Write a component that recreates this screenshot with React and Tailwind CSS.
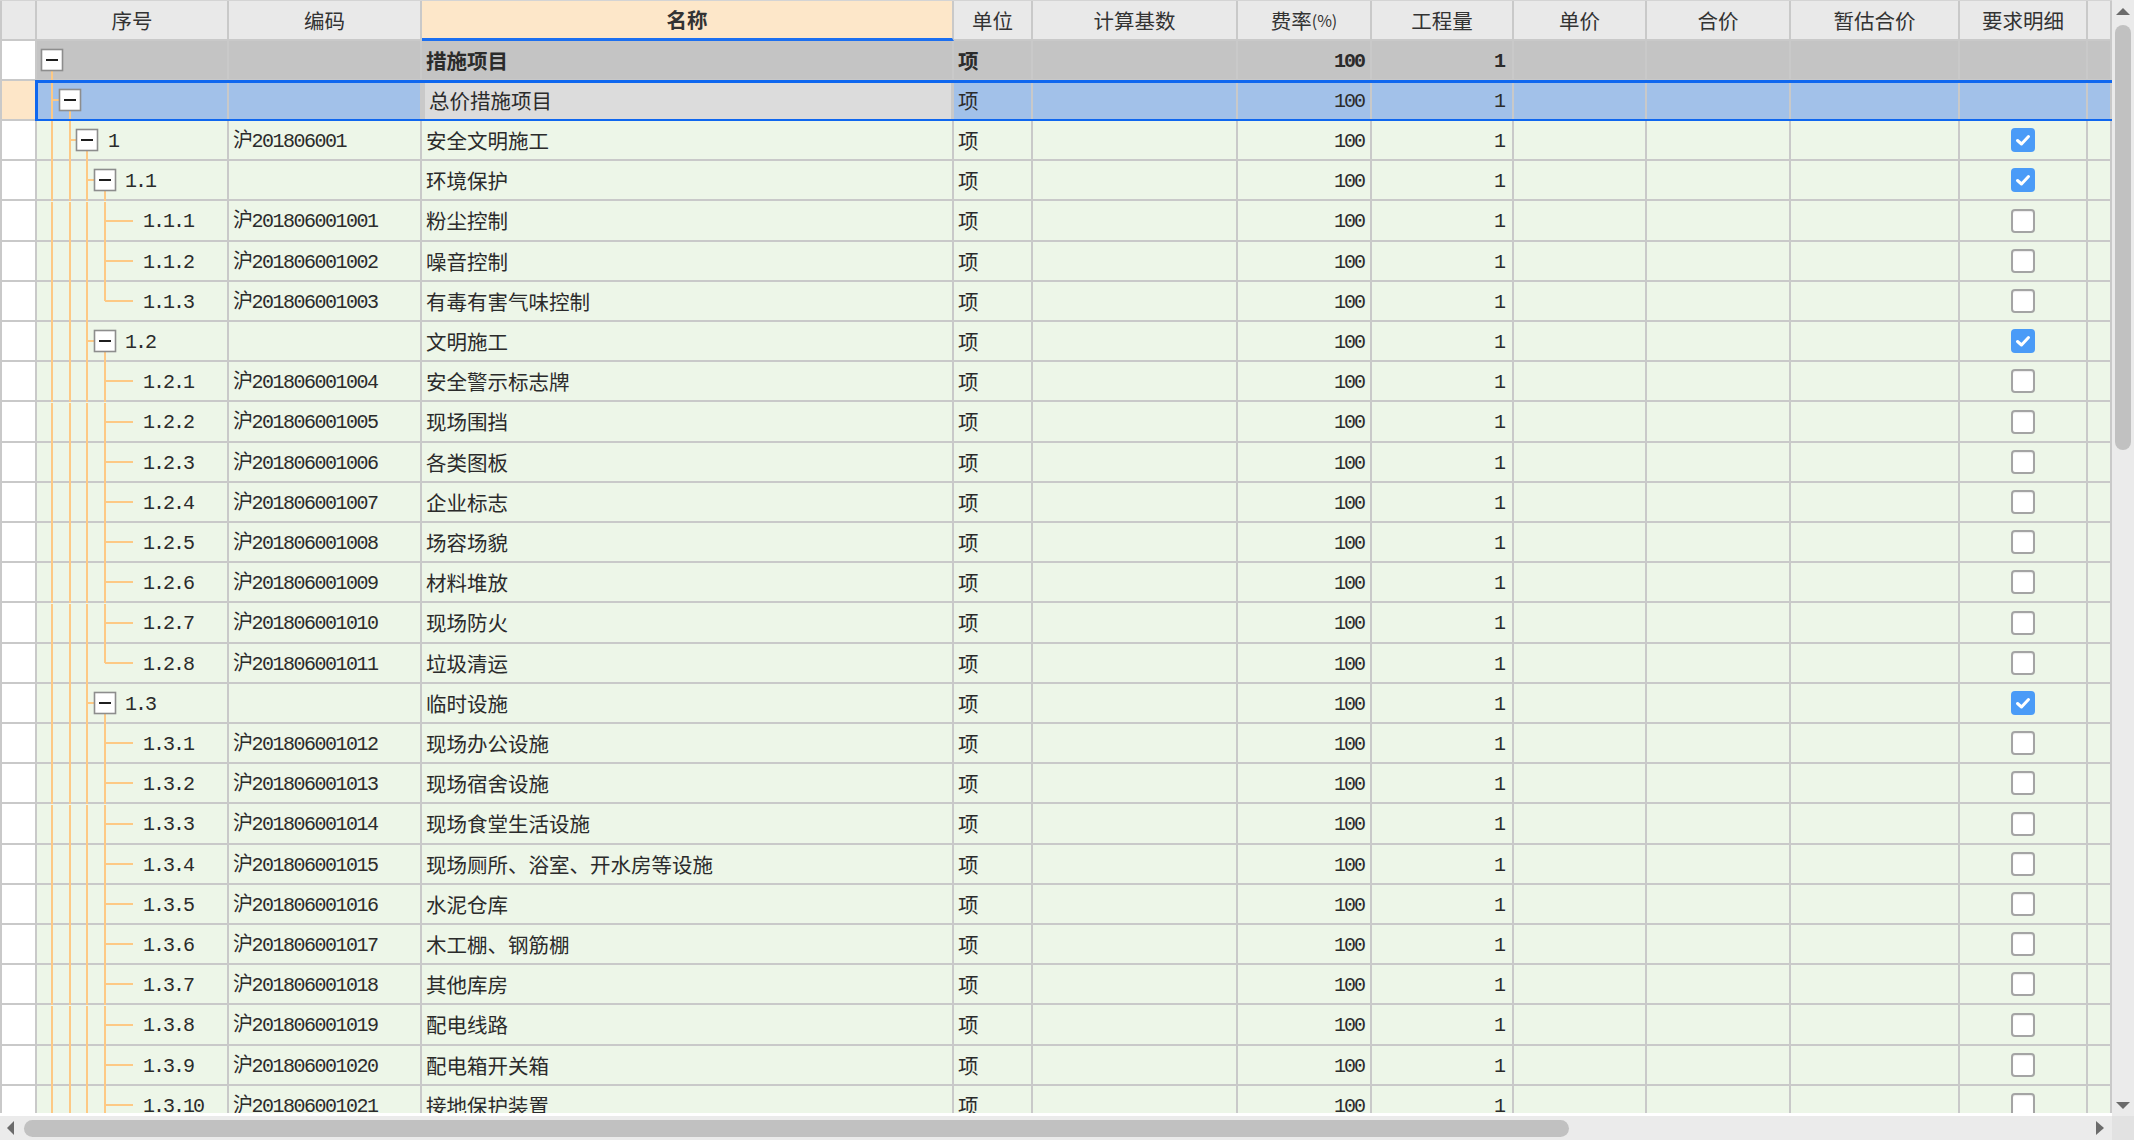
import React from 'react';

const ROWS = [
  { kind: 'node', level: 0, seq: '', code: '', name: '措施项目', check: null, root: true },
  { kind: 'node', level: 1, seq: '', code: '', name: '总价措施项目', check: null, selected: true },
  { kind: 'node', level: 2, seq: '1', code: '沪201806001', name: '安全文明施工', check: true },
  { kind: 'node', level: 3, seq: '1.1', code: '', name: '环境保护', check: true },
  { kind: 'leaf', seq: '1.1.1', code: '沪201806001001', name: '粉尘控制', check: false },
  { kind: 'leaf', seq: '1.1.2', code: '沪201806001002', name: '噪音控制', check: false },
  { kind: 'leaf', seq: '1.1.3', code: '沪201806001003', name: '有毒有害气味控制', check: false, last: true },
  { kind: 'node', level: 3, seq: '1.2', code: '', name: '文明施工', check: true },
  { kind: 'leaf', seq: '1.2.1', code: '沪201806001004', name: '安全警示标志牌', check: false },
  { kind: 'leaf', seq: '1.2.2', code: '沪201806001005', name: '现场围挡', check: false },
  { kind: 'leaf', seq: '1.2.3', code: '沪201806001006', name: '各类图板', check: false },
  { kind: 'leaf', seq: '1.2.4', code: '沪201806001007', name: '企业标志', check: false },
  { kind: 'leaf', seq: '1.2.5', code: '沪201806001008', name: '场容场貌', check: false },
  { kind: 'leaf', seq: '1.2.6', code: '沪201806001009', name: '材料堆放', check: false },
  { kind: 'leaf', seq: '1.2.7', code: '沪201806001010', name: '现场防火', check: false },
  { kind: 'leaf', seq: '1.2.8', code: '沪201806001011', name: '垃圾清运', check: false, last: true },
  { kind: 'node', level: 3, seq: '1.3', code: '', name: '临时设施', check: true },
  { kind: 'leaf', seq: '1.3.1', code: '沪201806001012', name: '现场办公设施', check: false },
  { kind: 'leaf', seq: '1.3.2', code: '沪201806001013', name: '现场宿舍设施', check: false },
  { kind: 'leaf', seq: '1.3.3', code: '沪201806001014', name: '现场食堂生活设施', check: false },
  { kind: 'leaf', seq: '1.3.4', code: '沪201806001015', name: '现场厕所、浴室、开水房等设施', check: false },
  { kind: 'leaf', seq: '1.3.5', code: '沪201806001016', name: '水泥仓库', check: false },
  { kind: 'leaf', seq: '1.3.6', code: '沪201806001017', name: '木工棚、钢筋棚', check: false },
  { kind: 'leaf', seq: '1.3.7', code: '沪201806001018', name: '其他库房', check: false },
  { kind: 'leaf', seq: '1.3.8', code: '沪201806001019', name: '配电线路', check: false },
  { kind: 'leaf', seq: '1.3.9', code: '沪201806001020', name: '配电箱开关箱', check: false },
  { kind: 'leaf', seq: '1.3.10', code: '沪201806001021', name: '接地保护装置', check: false },
];

const CX = [15, 33, 50, 68];
const LINE = '#fdc985';

function Tree({ row }) {
  const els = [];
  let width = 190;
  if (row.kind === 'leaf') {
    width = 106;
    [0, 1, 2].forEach((k) =>
      els.push(<line key={'v' + k} x1={CX[k]} y1={0} x2={CX[k]} y2={41} stroke={LINE} strokeWidth="2" />)
    );
    els.push(<line key="v3" x1={68} y1={0} x2={68} y2={row.last ? 19 : 41} stroke={LINE} strokeWidth="2" />);
    els.push(<line key="h" x1={68} y1={19} x2={96} y2={19} stroke={LINE} strokeWidth="2" />);
  } else {
    const L = row.level;
    if (L === 2) width = 71;
    if (L === 3) width = 88;
    for (let k = 0; k < L; k++) {
      els.push(<line key={'v' + k} x1={CX[k]} y1={0} x2={CX[k]} y2={41} stroke={LINE} strokeWidth="2" />);
    }
    if (L > 0) {
      els.push(<line key="h" x1={CX[L - 1]} y1={19} x2={CX[L] - 10} y2={19} stroke={LINE} strokeWidth="2" />);
    }
    els.push(<line key="down" x1={CX[L]} y1={29} x2={CX[L]} y2={41} stroke={LINE} strokeWidth="2" />);
    els.push(
      <rect key="box" x={CX[L] - 10.5} y={8.5} width="21" height="21" fill="#ffffff" stroke="#8d8d8d" strokeWidth="1.6" />
    );
    els.push(<line key="minus" x1={CX[L] - 6} y1={19} x2={CX[L] + 6} y2={19} stroke="#1f1f1f" strokeWidth="2" />);
  }
  return (
    <svg width={width} height="38" viewBox={`0 0 ${width} 38`} className="shrink-0 overflow-visible">
      {els}
    </svg>
  );
}

function Checkbox({ checked }) {
  if (checked) {
    return (
      <div className="w-[24px] h-[24px] rounded-[4px] bg-[#4a9bf7] flex items-center justify-center">
        <svg width="18" height="18" viewBox="0 0 18 18">
          <path d="M3.5 9.5 L7.5 13 L14.5 5.5" fill="none" stroke="#ffffff" strokeWidth="3" strokeLinecap="round" strokeLinejoin="round" />
        </svg>
      </div>
    );
  }
  return <div className="w-[24px] h-[24px] rounded-[4px] bg-white border-2 border-[#a4a4a4] shadow-[inset_0_1px_1px_rgba(0,0,0,0.08)]" />;
}

const cell = 'shrink-0 h-full border-r-2 border-[#c9c9c9] flex items-center';
const cjk = "font-['Noto_Sans_CJK_SC','Liberation_Sans',sans-serif]";
const mono = "font-['Liberation_Mono','Noto_Sans_CJK_SC',monospace]";

function Row({ row, tall }) {
  const bg = row.root ? 'bg-[#c4c4c4]' : row.selected ? 'bg-[#a2c1e9]' : 'bg-[#edf6e8]';
  const bold = row.root ? 'font-bold' : '';
  return (
    <div
      className={`relative flex ${tall ? 'h-[41px]' : 'h-[40px]'} shrink-0 border-b-2 border-[#c9c9c9] text-[#2b2b2b] ${bg}`}
    >
      <div className={`${cell} w-[37px] border-l-2 ${row.selected ? 'bg-[#fde6c8]' : 'bg-white'}`} />
      <div className={`${cell} w-[192px]`}>
        <Tree row={row} />
        {row.seq && <span className={`${mono} mt-[3px] text-[20px] tracking-[-2px] leading-none`}>{row.seq}</span>}
      </div>
      <div className={`${cell} w-[193px] pl-[4px]`}>
        <span className={`${mono} mt-[3px] text-[20px] tracking-[-1.5px] leading-none`}>{row.code}</span>
      </div>
      <div
        className={`${cell} w-[532px] pl-[4px] ${
          row.selected ? 'bg-[#dcdcdc] border-l-[3px] border-r-[3px] border-[#0f67ef]' : ''
        }`}
      >
        <span className={`${cjk} text-[20.5px] leading-none ${bold}`}>{row.name}</span>
      </div>
      <div className={`${cell} w-[79px] pl-[4px]`}>
        <span className={`${cjk} text-[20.5px] leading-none ${bold}`}>项</span>
      </div>
      <div className={`${cell} w-[205px]`} />
      <div className={`${cell} w-[134px] justify-end pr-[6px]`}>
        <span className={`${mono} mt-[3px] text-[20px] tracking-[-2px] leading-none ${bold}`}>100</span>
      </div>
      <div className={`${cell} w-[142px] justify-end pr-[8px]`}>
        <span className={`${mono} mt-[3px] text-[20px] tracking-[-2px] leading-none ${bold}`}>1</span>
      </div>
      <div className={`${cell} w-[133px]`} />
      <div className={`${cell} w-[144px]`} />
      <div className={`${cell} w-[169px]`} />
      <div className={`${cell} w-[128px] justify-center`}>
        {row.check !== null && <Checkbox checked={row.check} />}
      </div>
      <div className={`${cell} w-[24px]`} />
      {row.selected && (
        <div className="absolute left-[35px] right-0 -top-px -bottom-[3px] border-t-[3px] border-b-[3px] border-l-[3px] border-[#0f67ef] pointer-events-none" />
      )}
    </div>
  );
}

const headCell =
  "shrink-0 h-full border-r-2 border-b-2 border-[#c9c9c9] bg-[#e9e9e9] flex items-center justify-center text-[20.5px] leading-none text-[#333]";

function Header() {
  return (
    <div className={`flex h-[41px] shrink-0 border-t border-[#d4d4d4] ${cjk}`}>
      <div className={`${headCell} w-[37px] border-l-2`} />
      <div className={`${headCell} w-[192px]`}>序号</div>
      <div className={`${headCell} w-[193px]`}>编码</div>
      <div className={`${headCell} w-[532px] bg-[#fde7c9] border-b-[3px] border-b-[#1c6ff0] font-bold`}>名称</div>
      <div className={`${headCell} w-[79px]`}>单位</div>
      <div className={`${headCell} w-[205px]`}>计算基数</div>
      <div className={`${headCell} w-[134px]`}>
        费率<span className="text-[16px]">(%)</span>
      </div>
      <div className={`${headCell} w-[142px]`}>工程量</div>
      <div className={`${headCell} w-[133px]`}>单价</div>
      <div className={`${headCell} w-[144px]`}>合价</div>
      <div className={`${headCell} w-[169px]`}>暂估合价</div>
      <div className={`${headCell} w-[128px]`}>要求明细</div>
      <div className={`${headCell} w-[24px]`} />
    </div>
  );
}

export default function App() {
  return (
    <div className="w-[2134px] h-[1140px] flex flex-col overflow-hidden bg-white">
      <div className="flex h-[1116px] shrink-0">
        <div className="w-[2112px] h-full flex flex-col overflow-hidden border-b-[3px] border-white">
          <Header />
          {ROWS.map((r, i) => (
            <Row key={i} row={r} tall={i % 5 === 4} />
          ))}
        </div>
        <div className="w-[22px] h-full bg-[#ebebeb] flex flex-col items-center">
          <svg width="14" height="8" viewBox="0 0 14 8" className="mt-[8px] shrink-0">
            <polygon points="7,0 14,7 0,7" fill="#6b6b6b" />
          </svg>
          <div className="mt-[9px] w-[16px] h-[425px] rounded-full bg-[#c1c1c1]" />
          <div className="flex-1" />
          <svg width="14" height="8" viewBox="0 0 14 8" className="mb-[6px] shrink-0">
            <polygon points="0,0 14,0 7,7" fill="#6b6b6b" />
          </svg>
        </div>
      </div>
      <div className="flex h-[24px] shrink-0">
        <div className="w-[2112px] h-full bg-[#ebebeb] flex items-center">
          <svg width="8" height="14" viewBox="0 0 8 14" className="ml-[7px] shrink-0">
            <polygon points="7,0 7,14 0,7" fill="#6b6b6b" />
          </svg>
          <div className="ml-[9px] w-[1545px] h-[17px] rounded-full bg-[#c1c1c1]" />
          <div className="flex-1" />
          <svg width="8" height="14" viewBox="0 0 8 14" className="mr-[8px] shrink-0">
            <polygon points="0,0 8,7 0,14" fill="#6b6b6b" />
          </svg>
        </div>
        <div className="w-[22px] h-full bg-[#e2e2e2]" />
      </div>
    </div>
  );
}
